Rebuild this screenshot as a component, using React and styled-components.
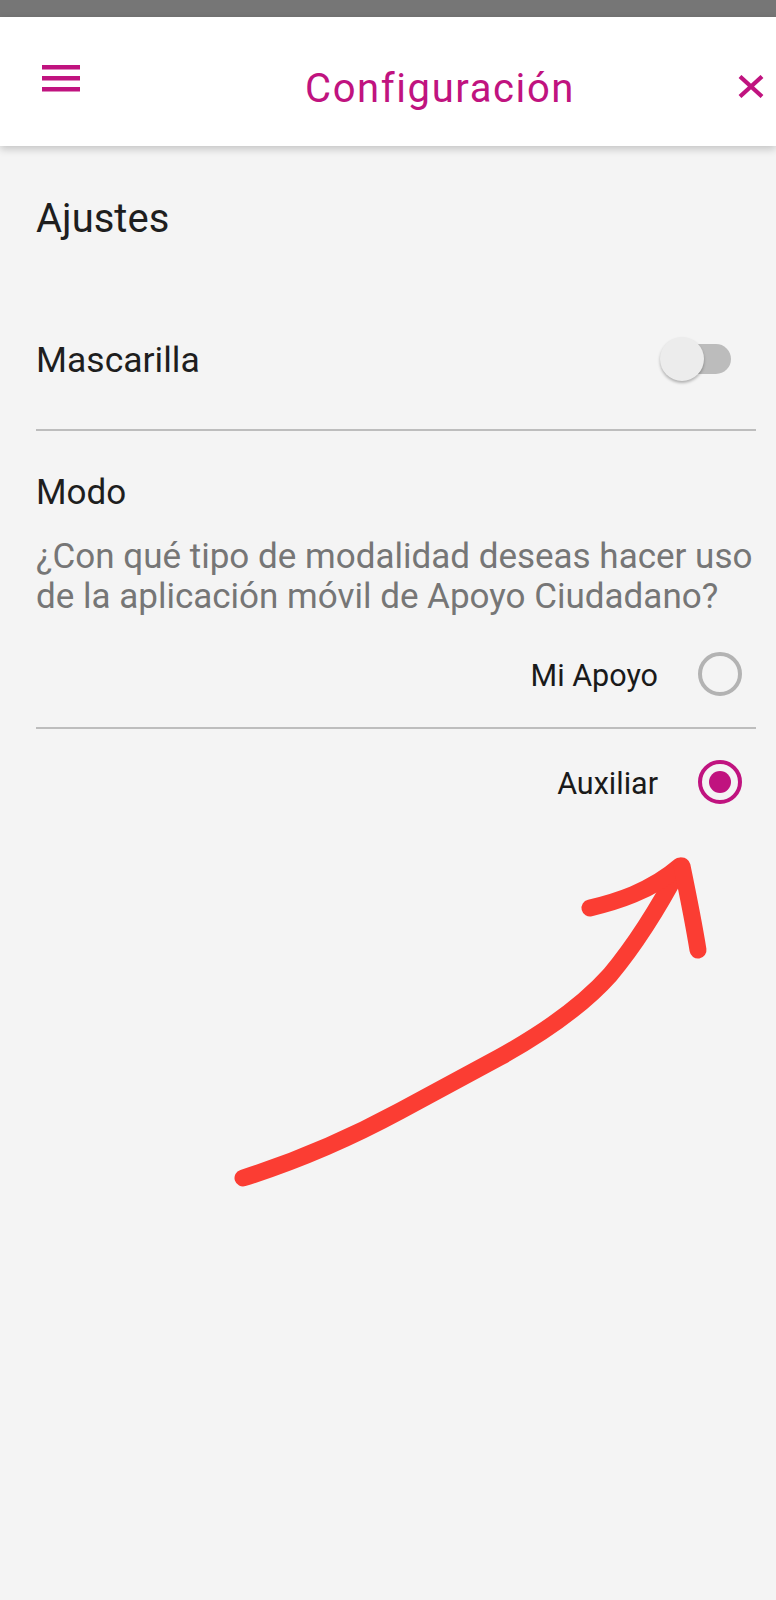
import styled, { createGlobalStyle } from "styled-components";
import { useState } from "react";

const MAGENTA = "#c0137f";

const App = () => {
  const [mask, setMask] = useState(false);
  const [mode, setMode] = useState("auxiliar");

  return (
    <Page>
      <GlobalStyle />
      <StatusBar />
      <Header>
        <IconButton aria-label="Menú" $top={48}>
          <svg width="38" height="27" viewBox="0 0 38 27">
            <rect x="0" y="0" width="38" height="4.5" fill={MAGENTA} />
            <rect x="0" y="11" width="38" height="4.5" fill={MAGENTA} />
            <rect x="0" y="22" width="38" height="4.5" fill={MAGENTA} />
          </svg>
        </IconButton>
        <Title>Configuración</Title>
        <IconButton aria-label="Cerrar" $top={58} $push>
          <svg width="26" height="23" viewBox="0 0 26 23">
            <path d="M2 1.5 L24 21.5 M24 1.5 L2 21.5" stroke={MAGENTA} strokeWidth="4.2" />
          </svg>
        </IconButton>
      </Header>

      <Content>
        <Heading>Ajustes</Heading>

        <SettingRow>
          <SettingLabel>Mascarilla</SettingLabel>
          <Switch onClick={() => setMask(!mask)} aria-label="Mascarilla">
            <Track $on={mask} />
            <Thumb $on={mask} />
          </Switch>
        </SettingRow>
        <Divider $gap={46} />

        <SubHeading>Modo</SubHeading>
        <Description>
          ¿Con qué tipo de modalidad deseas hacer uso de la aplicación móvil de
          Apoyo Ciudadano?
        </Description>

        <RadioRow $gap={35} onClick={() => setMode("miapoyo")}>
          <RadioLabel>Mi Apoyo</RadioLabel>
          <Radio $checked={mode === "miapoyo"}>
            <Dot $checked={mode === "miapoyo"} />
          </Radio>
        </RadioRow>
        <Divider $gap={31} />
        <RadioRow $gap={31} onClick={() => setMode("auxiliar")}>
          <RadioLabel>Auxiliar</RadioLabel>
          <Radio $checked={mode === "auxiliar"}>
            <Dot $checked={mode === "auxiliar"} />
          </Radio>
        </RadioRow>
      </Content>

      {/* hand-drawn annotation over the screen */}
      <Annotation width="500" height="380" viewBox="220 830 500 380">
        <g
          fill="none"
          stroke="#fb3d33"
          strokeWidth="17"
          strokeLinecap="round"
          strokeLinejoin="round"
        >
          <path d="M243 1178 C 300 1160, 350 1138, 400 1111 L 500 1057 C 545 1032, 585 1003, 610 975 C 635 945, 660 905, 680 867" />
          <path d="M590 908 C 615 902, 650 892, 680 866" />
          <path d="M682 866 C 688 895, 694 925, 698 950" />
        </g>
      </Annotation>
    </Page>
  );
};

export default App;

// Styles
const GlobalStyle = createGlobalStyle`
  body {
    margin: 0;
    background: #f4f4f4;
    font-family: Roboto, "Noto Sans", sans-serif;
  }
`;

const Page = styled.div`
  position: relative;
  min-height: 1600px;
  overflow: hidden;
  background: #f4f4f4;
`;

const StatusBar = styled.div`
  height: 17px;
  background: #767676;
`;

const Header = styled.header`
  position: relative;
  z-index: 1;
  display: flex;
  align-items: flex-start;
  height: 129px;
  box-sizing: border-box;
  padding: 0 12px 0 42px;
  background: #fff;
  box-shadow: 0 3px 8px rgba(0, 0, 0, 0.2);
`;

const IconButton = styled.button`
  display: flex;
  margin-top: ${(p) => p.$top}px;
  margin-left: ${(p) => (p.$push ? "auto" : "0")};
  padding: 0;
  border: none;
  background: none;
  cursor: pointer;
`;

const Title = styled.h1`
  margin: 47px 0 0 225px;
  font-size: 40px;
  line-height: 50px;
  letter-spacing: 1.6px;
  font-weight: 400;
  color: ${MAGENTA};
`;

const Content = styled.main`
  padding: 0 20px 0 36px;
`;

const Heading = styled.h2`
  margin: 50px 0 0;
  font-size: 40px;
  line-height: 46px;
  font-weight: 400;
  color: #1e1e1e;
`;

const SettingRow = styled.div`
  display: flex;
  align-items: center;
  justify-content: space-between;
  margin-top: 93px;
`;

const SettingLabel = styled.span`
  padding-top: 2px;
  font-size: 35.5px;
  line-height: 46px;
  color: #1e1e1e;
`;

const Switch = styled.button`
  position: relative;
  width: 71px;
  height: 44px;
  margin-right: 25px;
  padding: 0;
  border: none;
  background: none;
  cursor: pointer;
`;

const Track = styled.span`
  position: absolute;
  left: 12px;
  right: 0;
  top: 7px;
  height: 30px;
  border-radius: 15px;
  background: ${(p) => (p.$on ? "#e590c4" : "#bcbcbc")};
`;

const Thumb = styled.span`
  position: absolute;
  top: 0;
  left: ${(p) => (p.$on ? "27px" : "0")};
  width: 44px;
  height: 44px;
  border-radius: 50%;
  background: ${(p) => (p.$on ? MAGENTA : "#ececec")};
  box-shadow: 0 2px 3px rgba(0, 0, 0, 0.28);
`;

const Divider = styled.div`
  height: 2px;
  margin-top: ${(p) => p.$gap}px;
  background: #bdbdbd;
`;

const SubHeading = styled.h3`
  margin: 42px 0 0;
  font-size: 35px;
  line-height: 40px;
  font-weight: 400;
  color: #1e1e1e;
`;

const Description = styled.p`
  margin: 24px 0 0;
  font-size: 35px;
  line-height: 40px;
  color: #767676;
`;

const RadioRow = styled.div`
  display: flex;
  align-items: center;
  justify-content: flex-end;
  gap: 40px;
  margin-top: ${(p) => p.$gap}px;
  padding-right: 14px;
  cursor: pointer;
`;

const RadioLabel = styled.span`
  padding-top: 3px;
  font-size: 30.5px;
  line-height: 36px;
  color: #1a1a1a;
`;

const Radio = styled.span`
  display: grid;
  place-items: center;
  width: 44px;
  height: 44px;
  box-sizing: border-box;
  border-radius: 50%;
  border: 4px solid ${(p) => (p.$checked ? MAGENTA : "#b3b3b3")};
`;

const Dot = styled.span`
  width: 22px;
  height: 22px;
  border-radius: 50%;
  background: ${MAGENTA};
  visibility: ${(p) => (p.$checked ? "visible" : "hidden")};
`;

const Annotation = styled.svg`
  position: absolute;
  left: 220px;
  top: 830px;
  pointer-events: none;
`;
